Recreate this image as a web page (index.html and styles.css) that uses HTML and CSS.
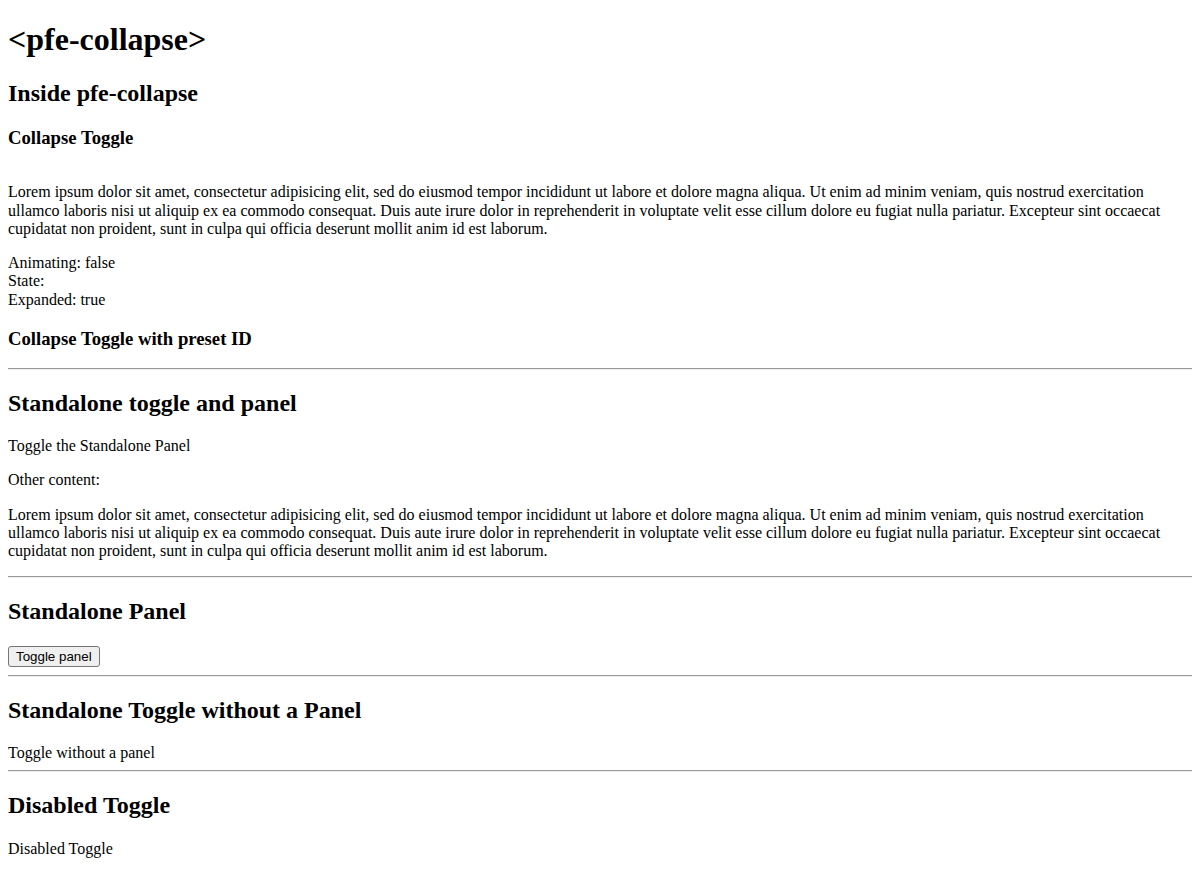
FILE: index.html
```html
<!DOCTYPE html>
<html lang="en">
<head>
<meta charset="utf-8">
<title>pfe-collapse</title>
<link rel="stylesheet" href="styles.css">
</head>
<body class="page">
<h1 class="title">&lt;pfe-collapse&gt;</h1>
<h2 class="section-title">Inside pfe-collapse</h2>
<div class="collapse">
  <h3 class="toggle-title">Collapse Toggle</h3>
  <div class="panel">
    <p class="panel-text">Lorem ipsum dolor sit amet, consectetur adipisicing elit, sed do eiusmod tempor incididunt ut labore et dolore magna aliqua. Ut enim ad minim veniam, quis nostrud exercitation ullamco laboris nisi ut aliquip ex ea commodo consequat. Duis aute irure dolor in reprehenderit in voluptate velit esse cillum dolore eu fugiat nulla pariatur. Excepteur sint occaecat cupidatat non proident, sunt in culpa qui officia deserunt mollit anim id est laborum.</p>
  </div>
</div>
<p class="text">Animating: false<br>State: <br>Expanded: true</p>
<h3 class="toggle-title">Collapse Toggle with preset ID</h3>
<hr class="rule">
<h2 class="section-title">Standalone toggle and panel</h2>
<div class="toggle">Toggle the Standalone Panel</div>
<p class="text">Other content:</p>
<p class="text">Lorem ipsum dolor sit amet, consectetur adipisicing elit, sed do eiusmod tempor incididunt ut labore et dolore magna aliqua. Ut enim ad minim veniam, quis nostrud exercitation ullamco laboris nisi ut aliquip ex ea commodo consequat. Duis aute irure dolor in reprehenderit in voluptate velit esse cillum dolore eu fugiat nulla pariatur. Excepteur sint occaecat cupidatat non proident, sunt in culpa qui officia deserunt mollit anim id est laborum.</p>
<hr class="rule">
<h2 class="section-title">Standalone Panel</h2>
<button class="btn" type="button">Toggle panel</button>
<hr class="rule">
<h2 class="section-title">Standalone Toggle without a Panel</h2>
<div class="toggle">Toggle without a panel</div>
<hr class="rule">
<h2 class="section-title">Disabled Toggle</h2>
<div class="toggle">Disabled Toggle</div>
</body>
</html>
```
FILE: styles.css
```css
.page {
  margin: 0 8px 8px;
  font-family: "Liberation Serif", "Times New Roman", serif;
  font-size: 16px;
  line-height: 1.14;
  color: #000;
  background: #fff;
}
.title {
  font-size: 2em;
  line-height: 1.15;
  margin: 0.67em 0;
  font-weight: bold;
}
.section-title {
  font-size: 1.5em;
  line-height: 1.15;
  margin: 0.83em 0;
  font-weight: bold;
}
.toggle-title {
  font-size: 1.17em;
  line-height: 1.15;
  margin: 1em 0;
  font-weight: bold;
}
.panel {
  display: flow-root;
}
.panel-text {
  margin: 1em 0 0;
}
.text {
  margin: 1em 0;
}
.toggle {
  display: block;
}
.rule {
  margin: 8px 0;
  border: 0;
  border-top: 1px solid #9a9a9a;
  border-bottom: 1px solid #eeeeee;
  height: 0;
}
.btn {
  font-family: "Liberation Sans", Arial, sans-serif;
  font-size: 13.333px;
  line-height: normal;
  padding: 2px 7px;
  background: #efefef;
  color: #000;
  border: 1px solid #767676;
  border-radius: 3px;
}
```
